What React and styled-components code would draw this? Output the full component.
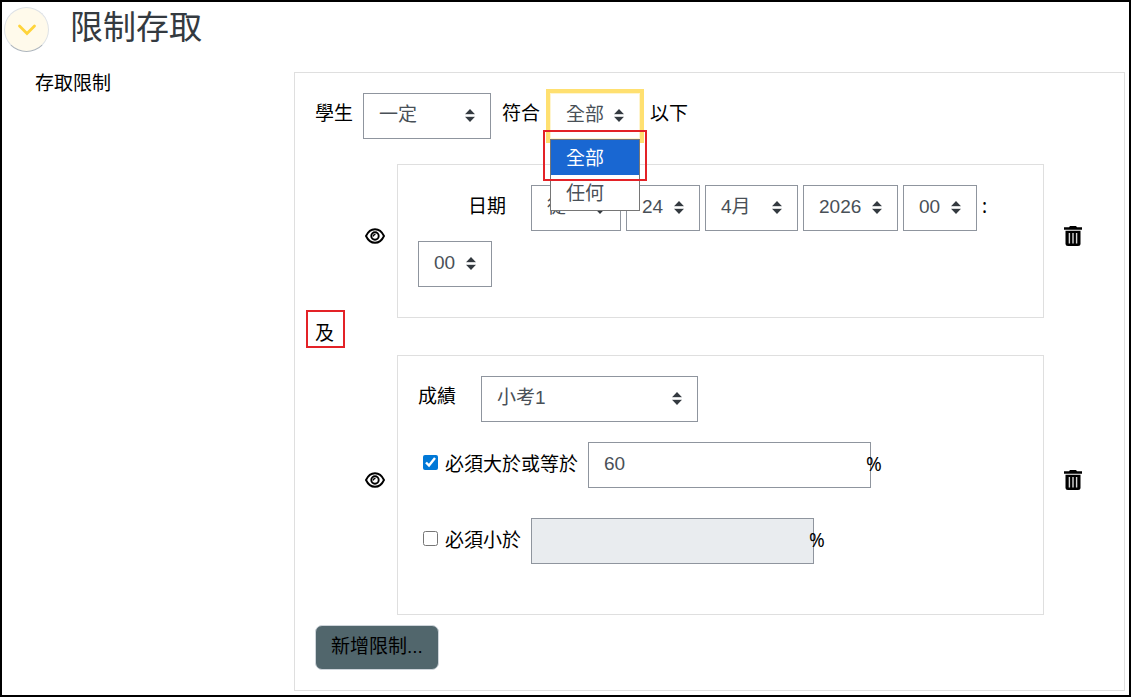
import React, { useState } from 'react'
import styled, { createGlobalStyle, css } from 'styled-components'

const arrowIcon =
  "url(\"data:image/svg+xml,%3Csvg xmlns='http://www.w3.org/2000/svg' viewBox='0 0 10 13'%3E%3Cpath fill='%23343a40' d='M5 0L0 5.2h10zM5 13L0 7.8h10z'/%3E%3Cpath fill='%23dcdee0' d='M0 5.2h10v.8H0zM0 7h10v.8H0z'/%3E%3C/svg%3E\")"

const days = ['24', '25', '26']
const months = ['4月', '5月', '6月']
const years = ['2026', '2027']
const hours = ['00', '01', '02']
const minutes = ['00', '15', '30', '45']

const SelectBox = ({ id, label, options, width, focused }) => (
  <Select id={id} aria-label={label} $width={width} $focused={focused}>
    {options.map((o) => (
      <option key={o}>{o}</option>
    ))}
  </Select>
)

const EyeIcon = () => (
  <svg width="20" height="16" viewBox="0 0 20 16" fill="none" stroke="#000">
    <path strokeWidth="1.9" d="M1 8C3 3.700 6.300 1.200 10 1.200S17 3.700 19 8C17 12.300 13.700 14.800 10 14.800S3 12.300 1 8z" />
    <circle cx="10" cy="8" r="3.700" strokeWidth="1.900" />
    <path strokeWidth="1.300" d="M8.300 8.600C8.300 7 9 6.400 10.500 6.400" />
  </svg>
)

const TrashIcon = () => (
  <svg width="18" height="20" viewBox="0 0 18 20">
    <path d="M6 0h6l1 1.300h5V3.700H0V1.300H5z" />
    <path d="M1.500 4.800h15V17.500a2.500 2.500 0 0 1-2.500 2.500H4a2.500 2.500 0 0 1-2.500-2.500z" />
    <path stroke="#d6d6d6" strokeWidth="1.400" d="M5.400 7v10.500M9 7v10.500M12.600 7v10.500" />
  </svg>
)

const Restriction = ({ children }) => (
  <RestrictionRow>
    <IconButton type="button" aria-label="顯示">
      <EyeIcon />
    </IconButton>
    <Card>{children}</Card>
    <IconButton type="button" aria-label="刪除">
      <TrashIcon />
    </IconButton>
  </RestrictionRow>
)

const GradeLimit = ({ id, label, initial, checked }) => {
  const [on, setOn] = useState(checked)
  const [value, setValue] = useState(initial)
  return (
    <LimitRow>
      <CheckLabel>
        <Checkbox type="checkbox" checked={on} onChange={(e) => setOn(e.target.checked)} />
        <span id={id}>{label}</span>
      </CheckLabel>
      <TextInput
        type="text"
        aria-labelledby={id}
        disabled={!on}
        value={value}
        onChange={(e) => setValue(e.target.value)}
      />
      <Percent>%</Percent>
    </LimitRow>
  )
}

export default function App() {
  return (
    <>
      <GlobalStyle />
      <Page>
        <Header>
          <Toggle type="button" aria-label="收合">
            <svg width="20" height="12" viewBox="0 0 20 12" fill="none">
              <path d="M2.500 2l7.500 7.500L17.500 2" stroke="#ffd43b" strokeWidth="2.800" strokeLinecap="round" />
            </svg>
          </Toggle>
          <Title>限制存取</Title>
        </Header>
        <Body>
          <FieldName>存取限制</FieldName>
          <Panel>
            <MatchRow>
              <label htmlFor="must">學生</label>
              <SelectBox id="must" options={['一定', '一定不']} width={128} />
              <label htmlFor="match">符合</label>
              <MenuAnchor>
                <SelectBox id="match" options={['全部', '任何']} width={90} focused />
                <Menu role="listbox">
                  <MenuItem role="option" aria-selected="true" $active>全部</MenuItem>
                  <MenuItem role="option" aria-selected="false">任何</MenuItem>
                </Menu>
                <MenuMark />
              </MenuAnchor>
              <span>以下</span>
            </MatchRow>

            <Restriction>
              <DateRow>
                <DateLabel htmlFor="direction">日期</DateLabel>
                <SelectBox id="direction" options={['從', '直到']} width={90} />
                <SelectBox label="日" options={days} width={74} />
                <SelectBox label="月" options={months} width={93} />
                <SelectBox label="年" options={years} width={95} />
                <SelectBox label="時" options={hours} width={74} />
                <Colon>:</Colon>
                <SelectBox label="分" options={minutes} width={74} />
              </DateRow>
            </Restriction>

            <Connector>
              <MarkedText>及</MarkedText>
            </Connector>

            <Restriction>
              <GradeRow>
                <label htmlFor="grade">成績</label>
                <SelectBox id="grade" options={['小考1', '小考2']} width={217} />
              </GradeRow>
              <GradeLimit id="min" label="必須大於或等於" initial="60" checked />
              <GradeLimit id="max" label="必須小於" initial="" checked={false} />
            </Restriction>

            <AddButton type="button">新增限制...</AddButton>
          </Panel>
        </Body>
      </Page>
    </>
  )
}

const GlobalStyle = createGlobalStyle`
  * {
    box-sizing: border-box;
  }
  body {
    margin: 0;
    background: #fff;
    color: #000;
    font-family: "Liberation Sans", "Noto Sans CJK TC", sans-serif;
    font-size: 19px;
    line-height: 28px;
  }
  button, input, select {
    font: inherit;
  }
`

const Page = styled.div`
  min-height: 100vh;
  padding: 5px 4px 4px 2px;
  border: 2px solid #000;
`

const Header = styled.header`
  display: flex;
  align-items: center;
  gap: 21px;
`

const Toggle = styled.button`
  display: flex;
  align-items: center;
  justify-content: center;
  width: 45px;
  height: 45px;
  padding: 0;
  border: 1px solid #dee2e6;
  border-bottom-color: #adb5bd;
  border-radius: 50%;
  background: #fffaeb;
`

const Title = styled.h3`
  margin: 0;
  padding-bottom: 4px;
  color: #343a40;
  font-size: 33px;
  font-weight: 400;
  line-height: 40px;
`

const Body = styled.div`
  display: grid;
  grid-template-columns: 290px 1fr;
  margin-top: 20px;
`

const FieldName = styled.div`
  padding-left: 31px;
  line-height: 24px;
`

const Panel = styled.section`
  padding: 20px;
  border: 1px solid #dfdfdf;
`

const MatchRow = styled.div`
  display: flex;
  align-items: center;
  gap: 10px;
  margin-bottom: 25px;

  > label, > span {
    padding-bottom: 4px;
  }

  > select + label {
    padding-left: 1px;
  }
`

const Select = styled.select`
  appearance: none;
  width: ${(p) => p.$width}px;
  height: 46px;
  padding: 0 15px 2px;
  border: 1px solid #8f959e;
  border-radius: 0;
  outline: none;
  background: #fff ${arrowIcon} no-repeat right 15px top 15px / 10px 13px;
  color: #495057;

  ${(p) =>
    p.$focused &&
    css`
      border-color: #fff5cf;
      box-shadow: 0 0 0 4px #ffe070;
    `}
`

const MenuAnchor = styled.div`
  position: relative;
  display: flex;
`

const Menu = styled.ul`
  position: absolute;
  z-index: 1;
  top: 100%;
  left: 0;
  width: 100%;
  margin: 0;
  padding: 0;
  border: 1px solid #767676;
  background: #fff;
  list-style: none;
`

const MenuItem = styled.li`
  padding: 3px 15px 0;
  background: ${(p) => (p.$active ? '#1967d2' : '#fff')};
  color: ${(p) => (p.$active ? '#fff' : '#495057')};
  line-height: 32px;
`

const MenuMark = styled.div`
  position: absolute;
  z-index: 2;
  top: 37px;
  left: -7px;
  width: 104px;
  height: 51px;
  border: 2px solid #e32227;
  pointer-events: none;
`

const RestrictionRow = styled.div`
  display: grid;
  grid-template-columns: 20px 1fr 26px;
  align-items: center;
  column-gap: 12px;
  padding-left: 50px;
  padding-right: 22px;

  > :last-child {
    justify-content: flex-end;
  }
`

const IconButton = styled.button`
  display: flex;
  margin-bottom: 10px;
  padding: 0;
  border: 0;
  background: none;
`

const Card = styled.div`
  padding: 20px 20px 0;
  border: 1px solid #dfdfdf;
`

const DateRow = styled.div`
  display: flex;
  flex-wrap: wrap;
  align-items: center;
  gap: 10px 5px;
  padding-bottom: 30px;
`

const DateLabel = styled.label`
  padding: 0 20px 2px 50px;
`

const Colon = styled.span`
  padding-bottom: 4px;
  font-family: "Noto Sans", sans-serif;
`

const Connector = styled.div`
  height: 37px;
  padding-top: 2px;
`

const MarkedText = styled.span`
  position: relative;
  display: inline-block;

  &::after {
    content: '';
    position: absolute;
    inset: -10px -11px 0 -9px;
    border: 2px solid #e32227;
  }
`

const GradeRow = styled.div`
  display: flex;
  align-items: center;
  gap: 25px;
  margin-bottom: 20px;

  > label {
    padding-bottom: 4px;
  }
`

const LimitRow = styled.div`
  display: flex;
  align-items: center;
  margin-bottom: 30px;

  &:last-child {
    margin-bottom: 50px;
  }
`

const CheckLabel = styled.label`
  display: flex;
  align-items: center;
  gap: 7px;
  margin-right: 10px;
  padding-left: 5px;
`

const Checkbox = styled.input`
  width: 15px;
  height: 15px;
  margin: 0 0 6px;
  accent-color: #0078d7;
`

const TextInput = styled.input`
  width: 283px;
  height: 46px;
  padding: 0 15px 2px;
  border: 1px solid #8f959e;
  border-radius: 0;
  background: #fff;
  color: #495057;

  &:disabled {
    background: #e9ecef;
  }
`

const Percent = styled.span`
  z-index: 1;
  margin-left: -5px;
  padding-bottom: 2px;
  font-family: "Noto Sans", sans-serif;
`

const AddButton = styled.button`
  display: block;
  height: 45px;
  margin-top: 10px;
  padding: 0 15px 2px;
  border: 1px solid #ced4da;
  border-radius: 7px;
  background: #51666c;
  color: #000;
`
